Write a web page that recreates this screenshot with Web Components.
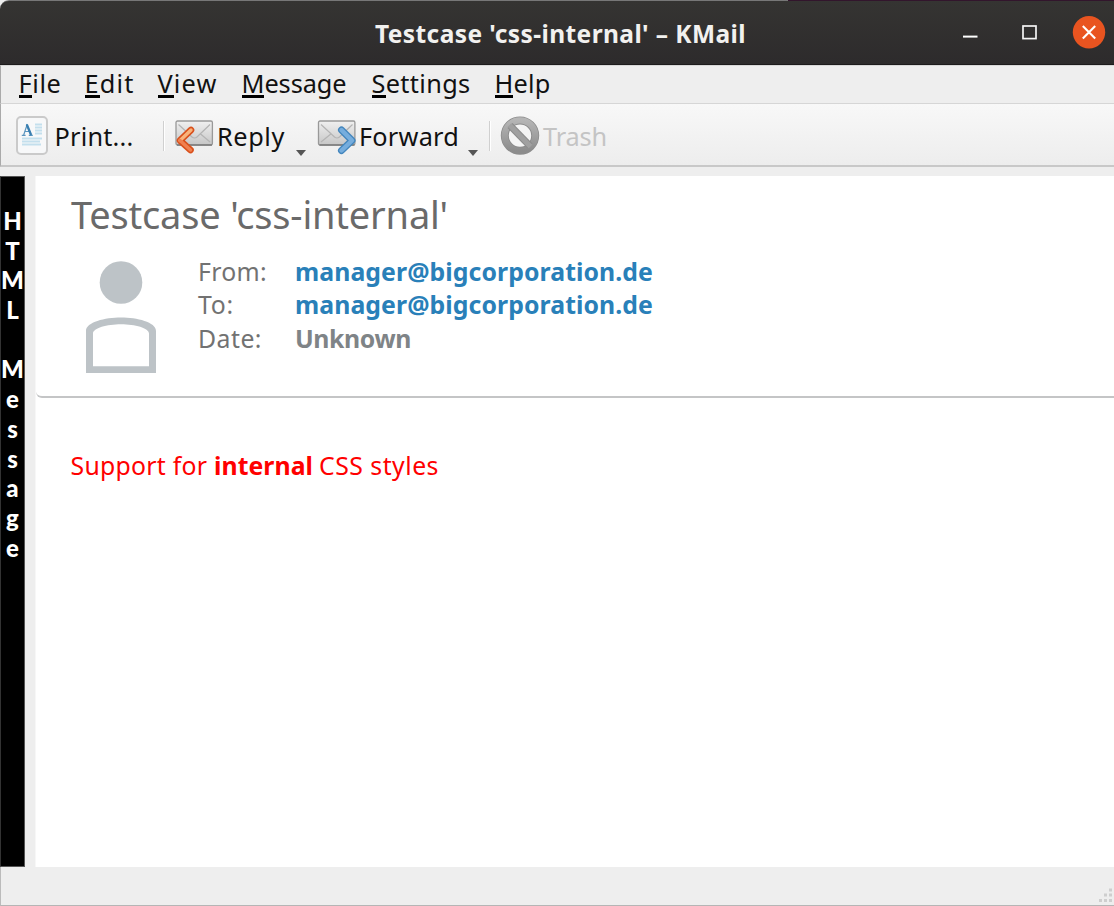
<!DOCTYPE html>
<html lang="en">
<head>
<meta charset="utf-8">
<title>Testcase 'css-internal' – KMail</title>
<style>
html,body{margin:0;height:100%;overflow:hidden;background:#eee;font-family:"Noto Sans","Open Sans",sans-serif}
</style>
</head>
<body>
<mail-window></mail-window>
<script>
const define=(name,html,extra)=>customElements.define(name,class extends HTMLElement{
  constructor(){super();const t=document.createElement('template');t.innerHTML=html;
    this.attachShadow({mode:'open'}).append(t.content.cloneNode(true));}
  connectedCallback(){if(extra)extra(this);}
});

/* One line of text tracked to occupy a given advance width. */
define('fit-text',`<style>:host{display:block;white-space:nowrap;flex:none}span{display:inline-block}</style><span><slot></slot></span>`,el=>{
  const w=+el.getAttribute('w'),s=el.shadowRoot.querySelector('span');
  el.style.width=w+'px';
  requestAnimationFrame(fit);fit();
  function fit(){el.style.letterSpacing='0px';
    const n=el.textContent.length,nat=s.getBoundingClientRect().width;
    if(nat)el.style.letterSpacing=((w-nat)/n).toFixed(3)+'px';}
});

define('title-bar',`<style>
:host{display:grid;grid-template-columns:375px 1fr auto;align-items:center;height:65px;box-sizing:border-box;background:linear-gradient(#353432,#2d2b2c);border-top:1px solid #777;border-bottom:1px solid #1d1b1c;border-radius:9px 0 0 0;color:#f2f1ef;font-size:24.5px;font-weight:700;line-height:36px;position:relative}
.edge{position:absolute;right:0;top:-1px;width:326px;height:1px;background:#32152c}
fit-text{grid-column:2;padding-top:2px}
svg{display:block}
</style><fit-text w="371">Testcase 'css-internal' – KMail</fit-text><i class="edge"></i>
<svg width="160" height="63" viewBox="954 1 160 63"><path d="M963 36.6h14.5" stroke="#fff" stroke-width="2"/><rect x="1023" y="26" width="13" height="12.6" fill="none" stroke="#f5f5f5" stroke-width="1.7"/><circle cx="1089" cy="32.3" r="16.2" fill="#e95420"/><path d="M1082.8 26.1l12.4 12.4m0-12.4l-12.4 12.4" stroke="#fff" stroke-width="2.1"/></svg>`);

define('menu-bar',`<style>
:host{display:flex;height:39px;box-sizing:border-box;padding-left:17.5px;background:#eee;border-top:1px solid #d8d8d8;border-left:1px solid #aaa;border-bottom:1px solid #d6d6d6;font-size:25.3px;line-height:35px;color:#111}
u{text-decoration:none;box-shadow:inset 0 -3px #000;display:inline-block;line-height:31px;height:29.5px}
fit-text{margin-right:23px}
</style>
<fit-text w="43">​<u>F</u>ile</fit-text><fit-text w="50"><u>E</u>dit</fit-text><fit-text w="60" style="margin-right:24px"><u>V</u>iew</fit-text><fit-text w="105" style="margin-right:25px"><u>M</u>essage</fit-text><fit-text w="99" style="margin-right:24px"><u>S</u>ettings</fit-text><fit-text w="56"><u>H</u>elp</fit-text>`.replace(/\u200b/g,''));

const envelope=`<defs><linearGradient id="e" x2="0" y2="1"><stop stop-color="#f0f0f0"/><stop offset="1" stop-color="#c6c6c6"/></linearGradient></defs><rect x="1" y="1" width="36.4" height="24" rx="1.5" fill="url(#e)" stroke="#999" stroke-width="1.3"/><path d="M2 25h35" stroke="#7c7c7c" stroke-width="1.4"/><path d="M3.5 4.5L17 17q2.5 2 5 0L35 4.5M3.5 22L14 13.5M35 22L25 13.5" fill="none" stroke="#b4b4b4" stroke-width="1.2"/>`;
define('tool-bar',`<style>
:host{display:flex;height:63px;box-sizing:border-box;padding-left:15px;background:linear-gradient(#f8f8f8,#ededed);border-left:1px solid #aaa;border-bottom:2px solid #c8c8c8;font-size:25.3px;line-height:65px;color:#111}
svg{flex:none;display:block}.sep{width:1px;height:30px;margin-top:17px;background:#d0d0d0;border-right:1px solid #fff;flex:none}
.arr{width:10px;height:6px;margin:46px 0 0;background:#555;clip-path:polygon(0 0,100% 0,50% 100%)}
</style>
<svg style="margin-top:12px" width="32" height="40" viewBox="0 0 32 40"><rect x="1" y="1" width="30" height="37" rx="4" fill="#f7f8f9" stroke="#cacaca" stroke-width="2"/><path d="M10.5 8l4.7 11.2M11 9L7.6 19.2M8.3 15.5h5.5M5.8 19.4h3.8M12.8 19.4h4" stroke="#5a95bf" stroke-width="1.2" fill="none"/><path d="M10.8 8.5l4.3 10.5" stroke="#397fb1" stroke-width="2.3"/><path d="M19 8.5h7M19 11.5h7M19 14.5h7M19 17.5h7M6 22.5h20M6 25.5h18M6 28.5h19" stroke="#c3dfed" stroke-width="1.9"/></svg>
<fit-text w="79" style="margin-left:6.5px">Print...</fit-text>
<i class="sep" style="margin-left:29.5px"></i>
<svg style="margin:16px 0 0 10px" width="40" height="36" viewBox="0 0 40 36">${envelope}<path d="M16 10L5 20.5l10.5 9.5" fill="none" stroke="#d9501c" stroke-width="6.6" stroke-linecap="round" stroke-linejoin="round"/><path d="M16 10L5 20.5" fill="none" stroke="#f9b37b" stroke-width="3.4" stroke-linecap="round"/><path d="M5 20.5l10.5 9.5" stroke="#f08050" stroke-width="3.4" stroke-linecap="round"/></svg>
<fit-text w="68" style="margin-left:2px">Reply</fit-text><i class="arr" style="margin-left:11px"></i>
<svg style="margin:16px 0 0 11px" width="41" height="36" viewBox="0 0 40 36">${envelope}<path d="M24 10l10.5 10.5L24 30.5" fill="none" stroke="#4386bd" stroke-width="7" stroke-linecap="round" stroke-linejoin="round"/><path d="M24 10l10.5 10.5L24 30.5" fill="none" stroke="#76addd" stroke-width="4.4" stroke-linecap="round" stroke-linejoin="round"/></svg>
<fit-text w="100" style="margin-left:1px">Forward</fit-text><i class="arr" style="margin-left:9px"></i>
<i class="sep" style="margin-left:11px"></i>
<svg style="margin:12px 0 0 9px" width="40" height="40" viewBox="0 0 40 40"><defs><linearGradient id="n" x2="0" y2="1"><stop stop-color="#b5b5b5"/><stop offset="1" stop-color="#8c8c8c"/></linearGradient></defs><circle cx="20" cy="19.6" r="15.2" fill="#f4f4f4" stroke="#8c8c8c" stroke-width="8"/><circle cx="20" cy="19.6" r="15.3" fill="none" stroke="url(#n)" stroke-width="6.2"/><path d="M10 9.5l20 20.5" stroke="#8c8c8c" stroke-width="7"/><path d="M9.5 9l21 21.5" stroke="#a0a0a0" stroke-width="5"/></svg>
<fit-text w="64" style="color:#c4c4c4;margin-left:3px">Trash</fit-text>`);

define('side-strip',`<style>
:host{display:flex;flex-direction:column;align-items:center;width:25px;box-sizing:border-box;border:1px solid #555;border-left-color:#333;background:#000;color:#fff;font-family:Lato,"Noto Sans",sans-serif;font-size:24px;font-weight:900;padding-top:29px}
span{height:29.7px;line-height:29.7px;white-space:pre}
</style>${[...'HTML Message'].map(c=>`<span>${c}</span>`).join('')}`);

define('message-header',`<style>
:host{display:block;height:222px;box-sizing:border-box;border-bottom:2px solid #c4c5c6;border-bottom-left-radius:6px;padding:12px 0 0 35px;color:#727272;background:#fff}
.h{font-size:38px;line-height:52px;color:#6a6a6a}
.row{display:grid;grid-template-columns:127px 97px auto;margin-top:15px}
svg{display:block;margin:5px 0 0 14px}
.c{font-size:24.8px;line-height:33.3px}.b{font-weight:700;color:#2980b9}.d{font-weight:700;color:#7f8487}
</style><fit-text class="h" w="377">Testcase 'css-internal'</fit-text>
<div class="row"><svg width="72" height="116" viewBox="0 0 72 116"><g fill="#bdc3c7"><circle cx="36" cy="22.5" r="21.3"/><path fill-rule="evenodd" d="M1 113V71C1 62 20 57.5 36 57.5S71 62 71 71v42zM8 106.3h56V73.5C64 68 50 64.2 36 64.2S8 68 8 73.5z"/></g></svg>
<div class="c"><fit-text w="69">From:</fit-text><fit-text w="36">To:</fit-text><fit-text w="64">Date:</fit-text></div>
<div class="c b"><fit-text w="358">manager@bigcorporation.de</fit-text><fit-text w="358">manager@bigcorporation.de</fit-text><fit-text class="d" w="116">Unknown</fit-text></div></div>`);

define('message-body',`<style>
:host{display:flex;padding:49px 0 0 34.5px;font-size:24.8px;line-height:36px;color:#f00}b,fit-text{white-space:pre}
</style><fit-text w="143.5">Support for </fit-text><fit-text w="99" style="font-weight:700">internal</fit-text><fit-text w="120" style="margin-left:6px">CSS styles</fit-text>`);

define('status-bar',`<style>
:host{display:flex;justify-content:flex-end;align-items:flex-end;height:39px;box-sizing:border-box;border-bottom:1px solid #b5b5b5;border-left:1px solid #bbb;background:#eee}svg{display:block}
</style><svg width="16" height="18" viewBox="0 0 16 18"><path d="M1 12h3v3h-3zM6 12h3v3H6zM11 12h3v3h-3zM6 6.5h3v3H6zM11 6.5h3v3h-3zM11 1.5h3v3h-3z" fill="#cecece"/></svg>`);

define('mail-window',`<style>
:host{display:flex;flex-direction:column;height:906px;background:#eee}
main{display:grid;grid-template-columns:25px 1fr;column-gap:10px;height:691px;margin-top:9px}
section{background:#fff;border-left:1px solid #f7f7f7}
</style><title-bar></title-bar><menu-bar></menu-bar><tool-bar></tool-bar>
<main><side-strip></side-strip><section><message-header></message-header><message-body></message-body></section></main><status-bar></status-bar>`);
</script>
</body>
</html>
